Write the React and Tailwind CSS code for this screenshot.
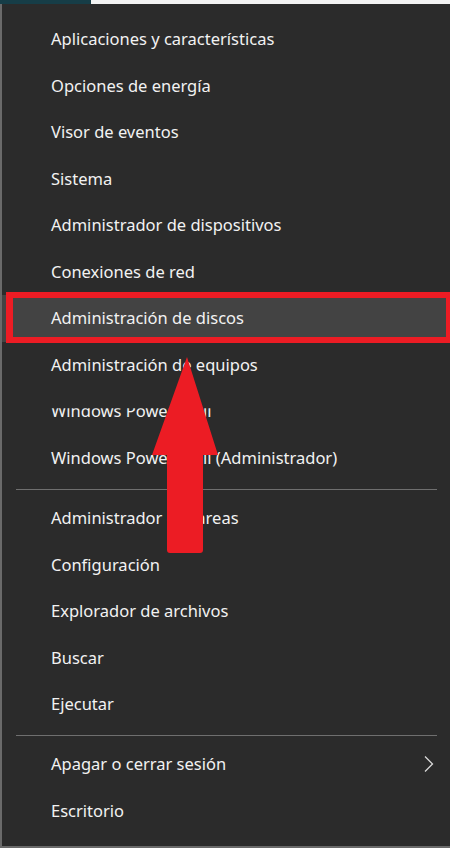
import React from 'react';

const grupoUno = [
  'Aplicaciones y características',
  'Opciones de energía',
  'Visor de eventos',
  'Sistema',
  'Administrador de dispositivos',
  'Conexiones de red',
  'Administración de discos',
  'Administración de equipos',
  'Windows PowerShell',
  'Windows PowerShell (Administrador)',
];

const grupoDos = [
  'Administrador de tareas',
  'Configuración',
  'Explorador de archivos',
  'Buscar',
  'Ejecutar',
];

const MenuItem = ({ label, active, clipped, chevron }) => (
  <div
    className={`h-[46.5px] flex items-center pl-[49px] pr-[15px] ${active ? 'bg-[#434343]' : ''}`}
  >
    <span
      className={`flex-1 text-[16.5px] leading-[24px] text-[#f2f2f2] ${clipped ? '[clip-path:inset(38%_0_0_0)]' : ''}`}
    >
      {label}
    </span>
    {chevron && (
      <svg width="12" height="18" viewBox="0 0 12 18">
        <path d="M2 1.5 L9.5 9 L2 16.5" fill="none" stroke="#d8d8d8" strokeWidth="1.3" />
      </svg>
    )}
  </div>
);

const Separador = ({ top, bottom }) => (
  <div className={`${top} ${bottom} ml-[14px] mr-[13px] h-px bg-[#6f6f6f]`} />
);

export default function App() {
  return (
    <div className="relative w-[450px] h-[848px] overflow-hidden bg-[#2b2b2b] font-['Noto_Sans',sans-serif]">
      {/* barra de tareas arriba */}
      <div className="flex h-[4px]">
        <div className="w-[91px] bg-[#163d47]" />
        <div className="flex-1 bg-[#f3f3f3]" />
      </div>

      <div className="h-[844px] border-l-2 border-b-2 border-[#6a6a6a] pt-[12px]">
        {grupoUno.map((item, i) => (
          <MenuItem key={item} label={item} active={i === 6} clipped={i === 8} />
        ))}
        <Separador top="mt-[7.5px]" bottom="mb-[5.25px]" />
        {grupoDos.map((item) => (
          <MenuItem key={item} label={item} />
        ))}
        <Separador top="mt-[7.75px]" bottom="mb-[4.75px]" />
        <MenuItem label="Apagar o cerrar sesión" chevron />
        <MenuItem label="Escritorio" />
      </div>

      {/* recuadro rojo */}
      <div className="absolute left-[6px] top-[292px] w-[446px] h-[51px] border-[6px] border-l-[7px] border-[#ec1c24]" />

      {/* flecha roja */}
      <svg className="absolute left-0 top-0" width="450" height="848" viewBox="0 0 450 848">
        <path
          d="M187 357 L218 455 L203 455 L203 550 Q203 553 200 553 L170 553 Q167 553 167 550 L167 455 L152 455 Z"
          fill="#ec1c24"
        />
      </svg>
    </div>
  );
}
